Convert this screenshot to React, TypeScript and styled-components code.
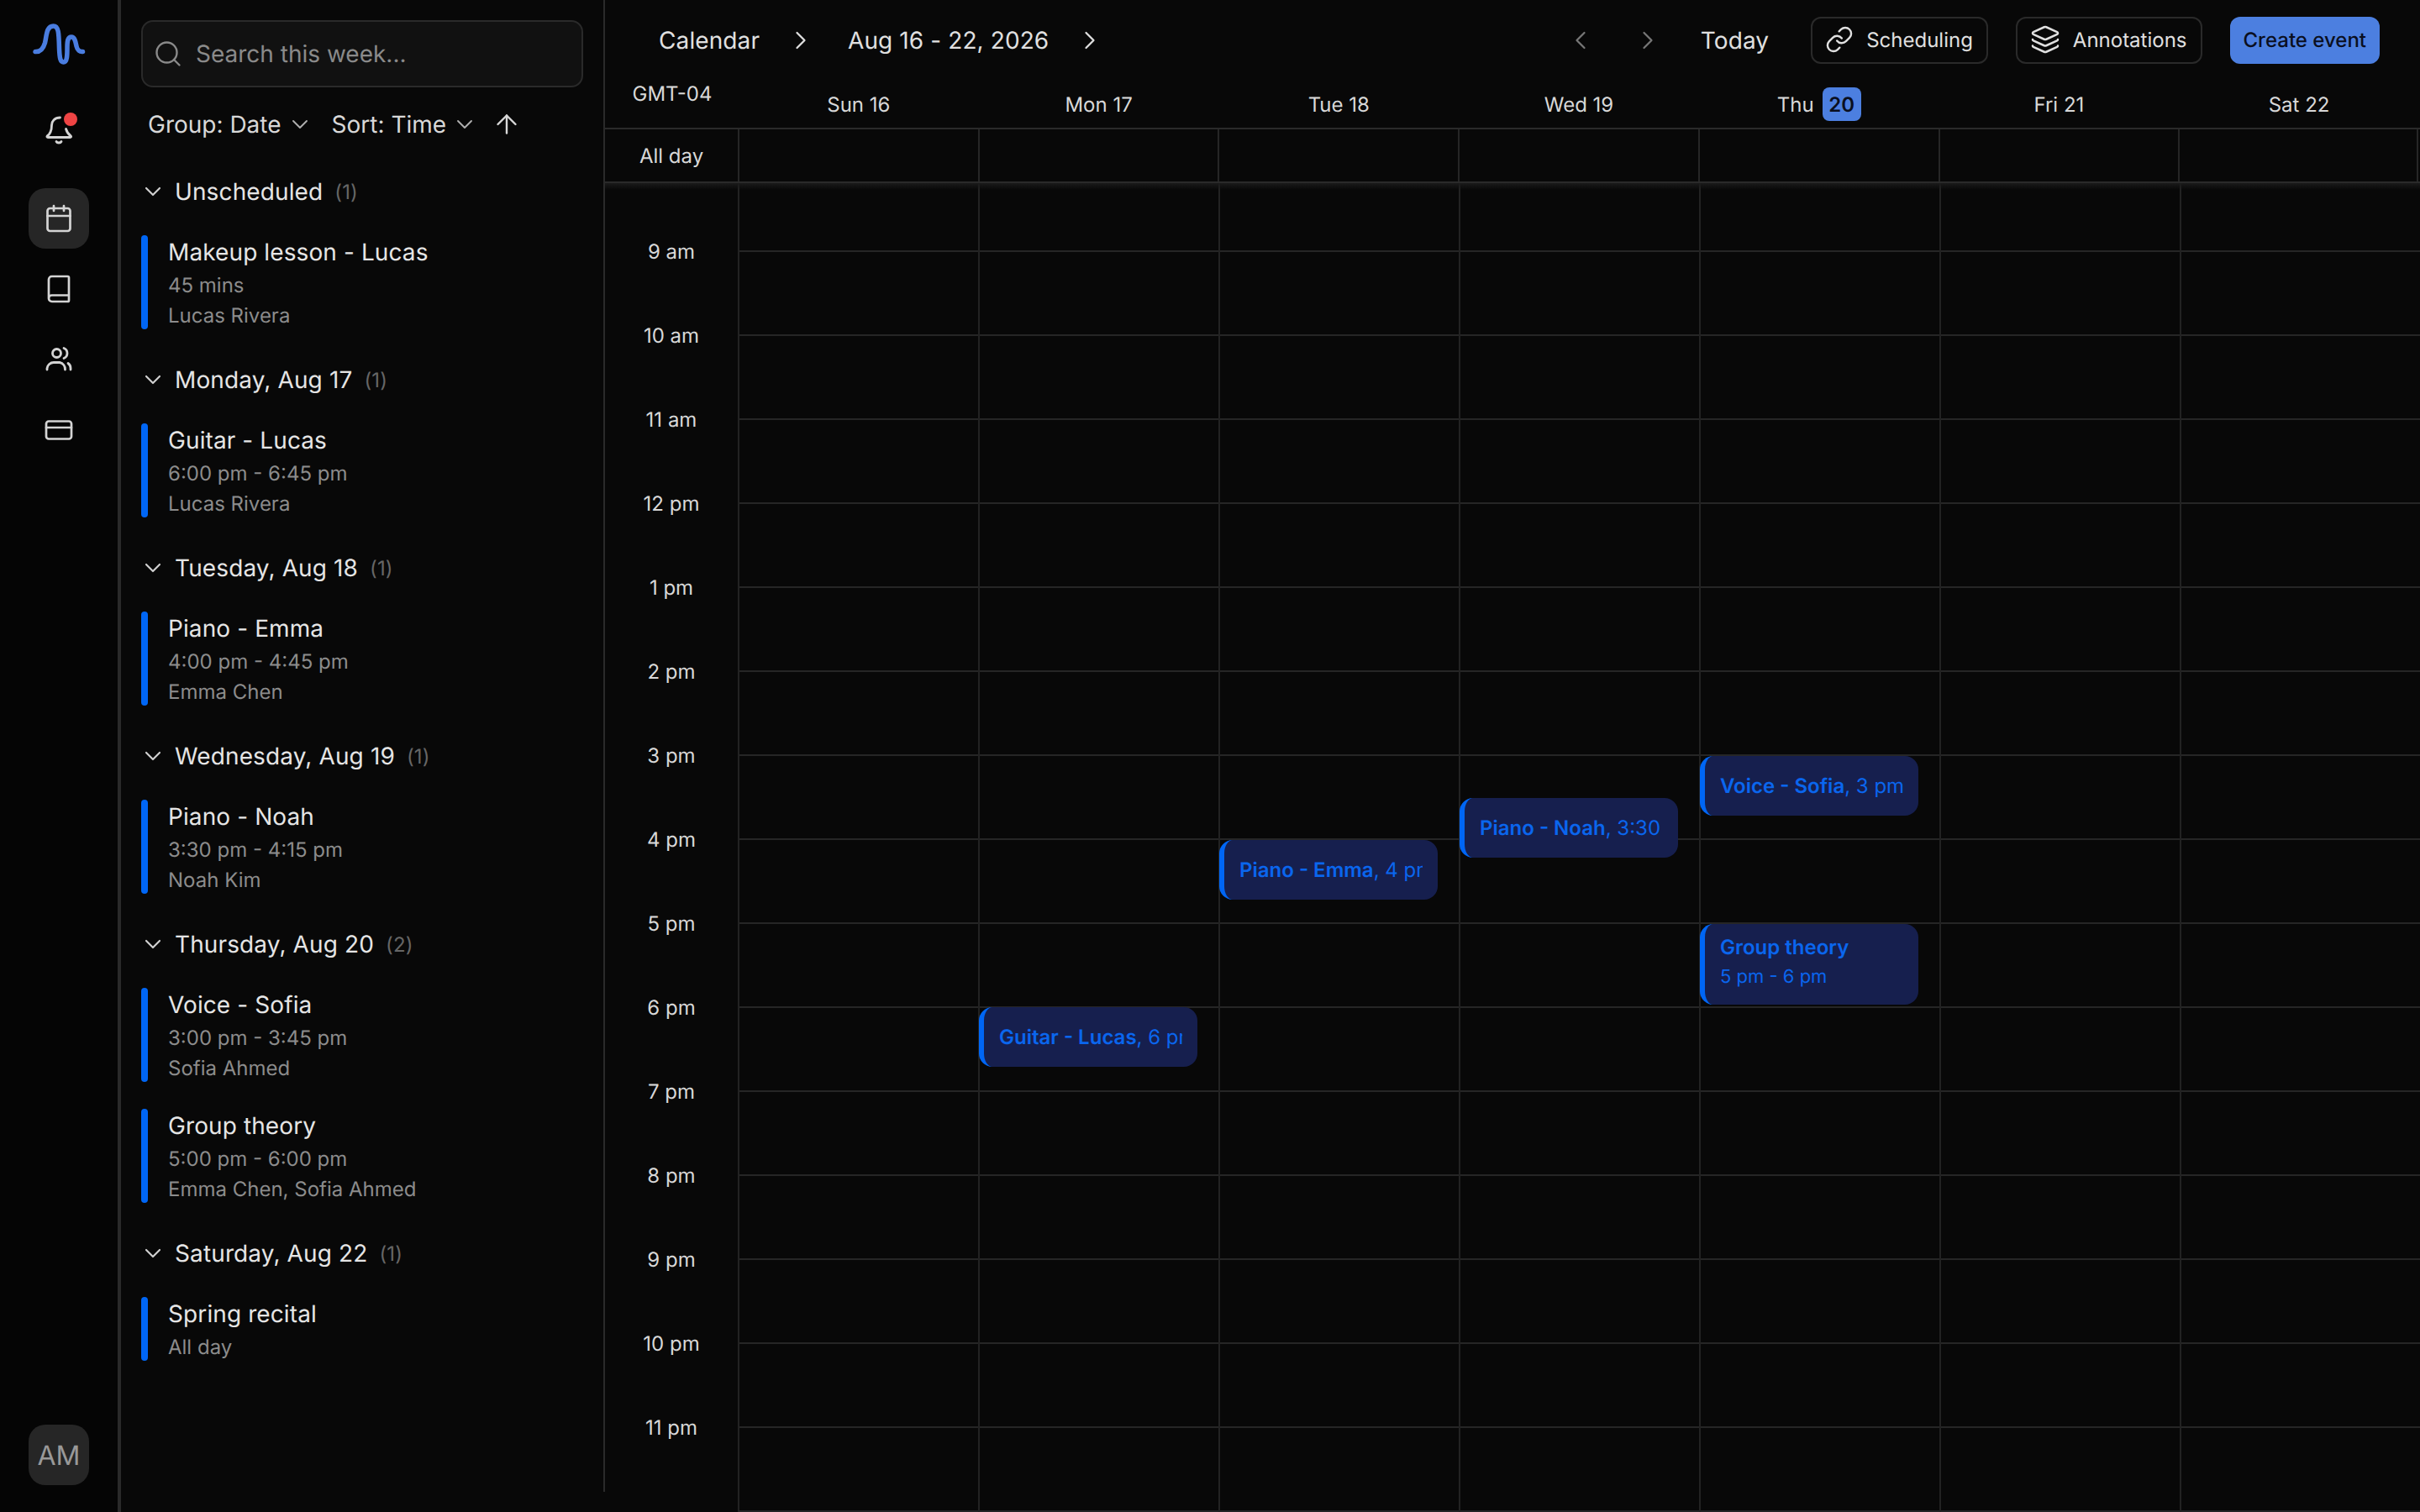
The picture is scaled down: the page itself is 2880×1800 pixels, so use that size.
import React from "react";
import styled, { createGlobalStyle } from "styled-components";
import { Book, Calendar, ChevronDown, ChevronLeft, ChevronRight, ArrowUp, CreditCard, Layers, Link, Search } from "lucide-react";

const Global = createGlobalStyle`
  html, body { margin: 0; padding: 0; height: 100%; background: #080808; }
  body {
    font-family: Inter, "Noto Sans", "Liberation Sans", sans-serif;
    overflow: hidden;
    text-rendering: geometricPrecision;
  }
  * { box-sizing: border-box; }
  #root { height: 100%; }
`;

const Page = styled.div`
  display: flex;
  width: 2880px;
  height: 1800px;
  background: #080808;
  color: #e5e5e5;
  overflow: hidden;
`;

const Rail = styled.nav`
  width: 144px;
  flex: none;
  height: 100%;
  background: #050505;
  border-right: 4px solid #2a2a2a;
  display: flex;
  flex-direction: column;
  align-items: center;
  padding: 28px 0 32px;
`;

const LogoMark = styled.svg`
  width: 62px;
  height: 49px;
  flex: none;
  margin-bottom: 43px;
  overflow: visible;
`;

const RailButton = styled.div<{ $active?: boolean }>`
  position: relative;
  width: 72px;
  height: 72px;
  margin-bottom: 12px;
  border-radius: 20px;
  display: flex;
  align-items: center;
  justify-content: center;
  color: #d4d4d4;
  background: ${(p) => (p.$active ? "#262626" : "transparent")};
`;

const BellGap = styled.div`
  margin-bottom: 20px;
`;

const Dot = styled.span`
  position: absolute;
  top: 14px;
  right: 14px;
  width: 16px;
  height: 16px;
  border-radius: 50%;
  background: #ef4444;
`;

const Avatar = styled.div`
  margin-top: auto;
  width: 72px;
  height: 72px;
  border-radius: 20px;
  background: #262626;
  color: #999;
  font-size: 32px;
  display: flex;
  align-items: center;
  justify-content: center;
`;

const Side = styled.aside`
  width: 576px;
  height: 1776px;
  flex: none;
  border-right: 2px solid #2a2a2a;
  padding: 24px 24px 0 24px;
  display: flex;
  flex-direction: column;
`;

const SearchBox = styled.div`
  height: 80px;
  flex: none;
  border: 2px solid #2a2a2a;
  border-radius: 14px;
  background: #111111;
  display: flex;
  align-items: center;
  gap: 15px;
  padding-left: 12px;
  color: #8a8a8a;
  font-size: 28px;
`;

const Filters = styled.div`
  height: 40px;
  margin: 24px 0 40px;
  padding-left: 8px;
  display: flex;
  align-items: center;
  font-size: 28px;
  color: #d8d8d8;
`;

const FilterItem = styled.div`
  display: flex;
  align-items: center;
  gap: 6px;
  margin-right: 30px;
  svg { margin: 0 -8px 0 0; color: #b0b0b0; }
`;

const SortArrow = styled.div`
  display: flex;
  margin-left: -6px;
  color: #d8d8d8;
`;

const Groups = styled.div`
  display: flex;
  flex-direction: column;
  gap: 40px;
`;

const Group = styled.section`
  display: flex;
  flex-direction: column;
  gap: 32px;
`;

const GroupHead = styled.div`
  height: 40px;
  display: flex;
  align-items: center;
  font-size: 28px;
  font-weight: 400;
  letter-spacing: 0.12px;
  color: #e5e5e5;
  svg { margin: 0 10px 0 -2px; color: #d0d0d0; flex: none; }
`;

const Count = styled.span`
  margin-left: 14px;
  font-size: 24px;
  font-weight: 400;
  color: #666;
`;

const Item = styled.div`
  display: flex;
  gap: 24px;
`;

const ItemBar = styled.div`
  width: 8px;
  flex: none;
  border-radius: 4px;
  background: #0066f5;
`;

const ItemBody = styled.div`
  display: flex;
  flex-direction: column;
  margin-bottom: -2px;
`;

const ItemTitle = styled.div`
  font-size: 28px;
  line-height: 40px;
  letter-spacing: 0.1px;
  margin-bottom: 2px;
  color: #e5e5e5;
`;

const ItemSub = styled.div`
  font-size: 24px;
  line-height: 36px;
  color: #8c8c8c;
`;

const Main = styled.main`
  flex: 1;
  min-width: 0;
  display: flex;
  flex-direction: column;
  height: 100%;
`;

const TopBar = styled.header`
  height: 96px;
  flex: none;
  padding: 0 48px 0 64px;
  display: flex;
  align-items: center;
  font-size: 28px;
  color: #e0e0e0;
`;

const Crumb = styled.span`
  white-space: nowrap;
  letter-spacing: 0.1px;
`;

const CrumbArrow = styled.div`
  display: flex;
  margin: 0 38px 0 31px;
  color: #e0e0e0;
`;

const Spacer = styled.div`
  flex: 1;
`;

const NavArrow = styled.div`
  display: flex;
  color: #777;
  margin-right: 44px;
`;

const Today = styled.span`
  margin: 0 50px 0 1px;
  white-space: nowrap;
  letter-spacing: 0.1px;
`;

const OutlineButton = styled.div`
  height: 56px;
  display: flex;
  align-items: center;
  gap: 15px;
  padding: 0 16px 2px 15px;
  border: 2px solid #2a2a2a;
  border-radius: 12px;
  font-size: 24px;
  color: #e0e0e0;
  margin-right: 33px;
  white-space: nowrap;
`;

const PrimaryButton = styled.div`
  height: 56px;
  display: flex;
  align-items: center;
  padding: 0 16px 2px;
  border-radius: 12px;
  font-size: 24px;
  font-weight: 500;
  background: #4c7fe0;
  color: #0a0f1f;
  white-space: nowrap;
`;

const DayHead = styled.div`
  height: 58px;
  flex: none;
  display: grid;
  grid-template-columns: 158px repeat(7, 285.71px);
  border-bottom: 2px solid #2a2a2a;
  font-size: 24px;
  color: #d8d8d8;
`;

const Zone = styled.div`
  text-align: center;
  line-height: 32px;
  padding-left: 2px;
`;

const DayName = styled.div`
  display: flex;
  align-items: center;
  justify-content: center;
  gap: 10px;
  height: 40px;
  margin-top: 8px;
  padding-left: 2px;
`;

const TodayBadge = styled.span`
  width: 46px;
  height: 40px;
  border-radius: 8px;
  background: #4c7fe0;
  color: #0a0f1f;
  font-weight: 600;
  display: flex;
  align-items: center;
  justify-content: center;
`;

const AllDay = styled.div`
  height: 64px;
  flex: none;
  display: grid;
  grid-template-columns: 158px repeat(7, 285.71px);
  border-bottom: 2px solid #2a2a2a;
  font-size: 24px;
  color: #d8d8d8;
  position: relative;
  &::after {
    content: "";
    position: absolute;
    left: 0;
    right: 0;
    top: 64px;
    height: 8px;
    background: linear-gradient(#1a1a1a, transparent);
    z-index: 3;
  }
`;

const AllDayLabel = styled.div`
  display: flex;
  align-items: center;
  justify-content: center;
`;

const AllDayCell = styled.div<{ $last?: boolean }>`
  border-left: 2px solid #262626;
  ${(p) => (p.$last ? "border-right: 2px solid #262626;" : "")}
`;

const Body = styled.div`
  flex: 1;
  min-height: 0;
  display: flex;
  overflow: hidden;
`;

const TimeColumn = styled.div`
  width: 158px;
  flex: none;
  padding-top: 31px;
`;

const TimeLabel = styled.div`
  height: 100px;
  display: flex;
  align-items: center;
  justify-content: center;
  font-size: 24px;
  color: #d8d8d8;
`;

const DayColumn = styled.div`
  position: relative;
  width: 286px;
  flex: none;
  border-left: 2px solid #222;
`;

const FirstSlot = styled.div`
  height: 80px;
`;

const Slot = styled.div`
  height: 100px;
  border-top: 2px solid #262626;
`;

const Event = styled.div<{ $tall?: boolean }>`
  position: absolute;
  left: -1px;
  width: 260px;
  border-left: 6px solid #0066f5;
  border-radius: 16px;
  background: #161f4e;
  color: #0a66ee;
  font-size: 24px;
  line-height: 34px;
  padding: ${(p) => (p.$tall ? "11px" : "1px")} 18px 0;
  display: flex;
  flex-direction: column;
  justify-content: ${(p) => (p.$tall ? "flex-start" : "center")};
  z-index: 2;
`;

const EventLine = styled.div`
  white-space: nowrap;
  overflow: hidden;
`;

const EventSub = styled.div`
  white-space: nowrap;
  overflow: hidden;
  margin-top: 1px;
  font-size: 22px;
`;

const EventName = styled.span`
  font-weight: 600;
`;

type Ev = { name: string; rest?: string; sub?: string; top: number; h: number };
type DayDef = { name: string; num: string; today?: boolean; events: Ev[] };

const days: DayDef[] = [
  { name: "Sun", num: "16", events: [] },
  { name: "Mon", num: "17", events: [{ name: "Guitar - Lucas", rest: ", 6 pm", top: 981, h: 71 }] },
  { name: "Tue", num: "18", events: [{ name: "Piano - Emma", rest: ", 4 pm", top: 782, h: 71 }] },
  { name: "Wed", num: "19", events: [{ name: "Piano - Noah", rest: ", 3:30 pm", top: 732, h: 71 }] },
  {
    name: "Thu",
    num: "20",
    today: true,
    events: [
      { name: "Voice - Sofia", rest: ", 3 pm", top: 682, h: 71 },
      { name: "Group theory", sub: "5 pm - 6 pm", top: 882, h: 96 },
    ],
  },
  { name: "Fri", num: "21", events: [] },
  { name: "Sat", num: "22", events: [] },
];

const hours = ["9 am", "10 am", "11 am", "12 pm", "1 pm", "2 pm", "3 pm", "4 pm", "5 pm", "6 pm", "7 pm", "8 pm", "9 pm", "10 pm", "11 pm"];

const groups = [
  { title: "Unscheduled", items: [{ t: "Makeup lesson - Lucas", s: "45 mins", p: "Lucas Rivera" }] },
  { title: "Monday, Aug 17", items: [{ t: "Guitar - Lucas", s: "6:00 pm - 6:45 pm", p: "Lucas Rivera" }] },
  { title: "Tuesday, Aug 18", items: [{ t: "Piano - Emma", s: "4:00 pm - 4:45 pm", p: "Emma Chen" }] },
  { title: "Wednesday, Aug 19", items: [{ t: "Piano - Noah", s: "3:30 pm - 4:15 pm", p: "Noah Kim" }] },
  {
    title: "Thursday, Aug 20",
    items: [
      { t: "Voice - Sofia", s: "3:00 pm - 3:45 pm", p: "Sofia Ahmed" },
      { t: "Group theory", s: "5:00 pm - 6:00 pm", p: "Emma Chen, Sofia Ahmed" },
    ],
  },
  { title: "Saturday, Aug 22", items: [{ t: "Spring recital", s: "All day" }] },
];

const Logo = () => (
  <LogoMark viewBox="0 0 62 49" fill="none" stroke="#4a7de0" strokeWidth="5.500" strokeLinecap="round" strokeLinejoin="round">
    <path d="M3 33.500C9 34 12.500 30 14.500 23C16.500 15 16 3 24.500 3C31 3 31 12 31.500 30C32 42 33 46 36.500 46C41 46 41 38 41 28C41 20 42 16 46 16C50 16 51 22 52 27C53 31.500 56 34 59.500 33.500" />
  </LogoMark>
);

const BellIcon = () => (
  <svg width="36" height="36" viewBox="0 0 36 36" fill="none" stroke="currentColor" strokeWidth="2.800" strokeLinecap="round" strokeLinejoin="round">
    <path d="M19.500 2C13 2 9.500 6.500 9.500 11C9.500 17 7 22 4.200 24C3.500 24.800 4 25.500 5 25.500H31.500C32.500 25.500 33 24.800 32.300 24C29.500 22 27.500 19 26.500 15.500" />
    <path d="M15 30.500C16 32.500 20 32.500 21 30.500" />
  </svg>
);

const UsersIcon = () => (
  <svg width="36" height="36" viewBox="0 0 36 36" fill="none" stroke="currentColor" strokeWidth="2.800" strokeLinecap="round" strokeLinejoin="round">
    <circle cx="15.500" cy="10.500" r="5" />
    <path d="M4 30v-1.500a8 8 0 0 1 8-7h7a8 8 0 0 1 6.500 8.500V30" />
    <path d="M24 4.500a6.500 6.500 0 0 1 0 12" />
    <path d="M29 22.500a7 7 0 0 1 3 5.500v2" />
  </svg>
);

export default function App() {
  return (
    <Page>
      <Global />
      <Rail>
        <Logo />
        <BellGap>
          <RailButton>
            <BellIcon />
            <Dot />
          </RailButton>
        </BellGap>
        <RailButton $active>
          <Calendar size={36} strokeWidth={1.8} />
        </RailButton>
        <RailButton>
          <Book size={36} strokeWidth={1.8} />
        </RailButton>
        <RailButton>
          <UsersIcon />
        </RailButton>
        <RailButton>
          <CreditCard size={36} strokeWidth={1.8} />
        </RailButton>
        <Avatar>AM</Avatar>
      </Rail>

      <Side>
        <SearchBox>
          <Search size={36} strokeWidth={1.6} />
          Search this week...
        </SearchBox>
        <Filters>
          <FilterItem>
            Group: Date
            <ChevronDown size={32} strokeWidth={1.4} />
          </FilterItem>
          <FilterItem>
            Sort: Time
            <ChevronDown size={32} strokeWidth={1.4} />
          </FilterItem>
          <SortArrow>
            <ArrowUp size={36} strokeWidth={1.6} />
          </SortArrow>
        </Filters>
        <Groups>
          {groups.map((g) => (
            <Group key={g.title}>
              <GroupHead>
                <ChevronDown size={32} strokeWidth={1.6} />
                {g.title}
                <Count>({g.items.length})</Count>
              </GroupHead>
              {g.items.map((it) => (
                <Item key={it.t}>
                  <ItemBar />
                  <ItemBody>
                    <ItemTitle>{it.t}</ItemTitle>
                    <ItemSub>{it.s}</ItemSub>
                    {it.p && <ItemSub>{it.p}</ItemSub>}
                  </ItemBody>
                </Item>
              ))}
            </Group>
          ))}
        </Groups>
      </Side>

      <Main>
        <TopBar>
          <Crumb>Calendar</Crumb>
          <CrumbArrow>
            <ChevronRight size={36} strokeWidth={1.5} />
          </CrumbArrow>
          <Crumb>Aug 16 - 22, 2026</Crumb>
          <CrumbArrow>
            <ChevronRight size={36} strokeWidth={1.5} />
          </CrumbArrow>
          <Spacer />
          <NavArrow>
            <ChevronLeft size={36} strokeWidth={1.5} />
          </NavArrow>
          <NavArrow>
            <ChevronRight size={36} strokeWidth={1.5} />
          </NavArrow>
          <Today>Today</Today>
          <OutlineButton>
            <Link size={34} strokeWidth={1.7} />
            Scheduling
          </OutlineButton>
          <OutlineButton>
            <Layers size={36} strokeWidth={1.7} />
            Annotations
          </OutlineButton>
          <PrimaryButton>Create event</PrimaryButton>
        </TopBar>

        <DayHead>
          <Zone>GMT-04</Zone>
          {days.map((d) => (
            <DayName key={d.name}>
              {d.today ? (
                <>
                  {d.name}
                  <TodayBadge>{d.num}</TodayBadge>
                </>
              ) : (
                `${d.name} ${d.num}`
              )}
            </DayName>
          ))}
        </DayHead>

        <AllDay>
          <AllDayLabel>All day</AllDayLabel>
          {days.map((d, i) => (
            <AllDayCell key={d.name} $last={i === days.length - 1} />
          ))}
        </AllDay>

        <Body>
          <TimeColumn>
            {hours.map((h) => (
              <TimeLabel key={h}>{h}</TimeLabel>
            ))}
          </TimeColumn>
          {days.map((d) => (
            <DayColumn key={d.name}>
              <FirstSlot />
              {hours.map((h) => (
                <Slot key={h} />
              ))}
              <Slot />
              {d.events.map((e) => (
                <Event key={e.name} $tall={!!e.sub} style={{ top: e.top, height: e.h }}>
                  <EventLine>
                    <EventName>{e.name}</EventName>
                    {e.rest}
                  </EventLine>
                  {e.sub && <EventSub>{e.sub}</EventSub>}
                </Event>
              ))}
            </DayColumn>
          ))}
        </Body>
      </Main>
    </Page>
  );
}
